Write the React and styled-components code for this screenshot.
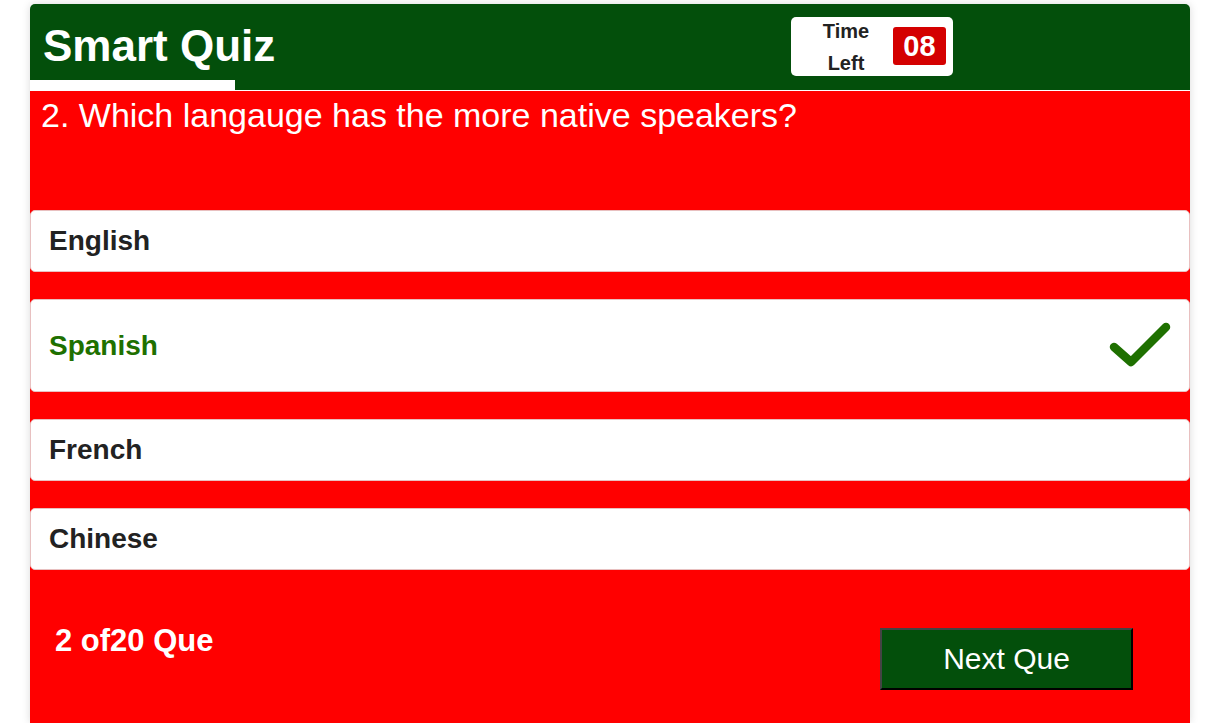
import React from "react";
import styled, { createGlobalStyle } from "styled-components";

const GlobalStyle = createGlobalStyle`
  html, body {
    margin: 0;
    padding: 0;
    overflow: hidden;
    background: #fff;
    font-family: "Liberation Sans", Arial, sans-serif;
  }
`;

const options = [
  { text: "English" },
  { text: "Spanish", correct: true },
  { text: "French" },
  { text: "Chinese" },
];

const CheckIcon = () => (
  <svg width="62" height="63" viewBox="0 0 62 63">
    <path
      d="M5 33 L22 48 L57 13"
      fill="none"
      stroke="#1e7000"
      strokeWidth="8.5"
      strokeLinecap="round"
      strokeLinejoin="round"
    />
  </svg>
);

const App = () => {
  return (
    <Page>
      <GlobalStyle />
      <Card>
        <Header>
          <HeaderRow>
            <Title>Smart Quiz</Title>
            <Timer>
              <TimerLabel>
                Time
                <br />
                Left
              </TimerLabel>
              <TimerCount>08</TimerCount>
            </Timer>
          </HeaderRow>
          <Progress />
        </Header>
        <Body>
          <Question>2. Which langauge has the more native speakers?</Question>
          <OptionList>
            {options.map((item) => (
              <Option key={item.text} $correct={item.correct}>
                <span>{item.text}</span>
                {item.correct && <CheckIcon />}
              </Option>
            ))}
          </OptionList>
          <Footer>
            <Count>2 of20 Que</Count>
            <NextButton>Next Que</NextButton>
          </Footer>
        </Body>
      </Card>
    </Page>
  );
};

const Page = styled.div`
  padding: 4px 19px 0 30px;
`;

const Card = styled.div`
  width: 1160px;
  background: #fff;
  border-radius: 5px 5px 0 0;
  box-shadow: 0 0 8px rgba(0, 0, 0, 0.15);
`;

const Header = styled.header`
  background: #034f0b;
  border-radius: 5px 5px 0 0;
  display: flex;
  flex-direction: column;
`;

const HeaderRow = styled.div`
  height: 76px;
  box-sizing: border-box;
  padding: 8px 237px 0 13px;
  display: flex;
  align-items: center;
  justify-content: space-between;
`;

const Title = styled.h1`
  margin: 0;
  color: #fff;
  font-size: 44px;
  font-weight: bold;
`;

const Timer = styled.div`
  width: 162px;
  height: 59px;
  box-sizing: border-box;
  background: #fff;
  border-radius: 5px;
  display: flex;
  align-items: center;
  padding: 0 7px 0 10px;
  gap: 2px;
`;

const TimerLabel = styled.div`
  width: 90px;
  padding-top: 2px;
  text-align: center;
  font-size: 20px;
  font-weight: bold;
  line-height: 32px;
  color: #222;
`;

const TimerCount = styled.div`
  width: 53px;
  height: 38px;
  background: #d40000;
  border-radius: 3px;
  color: #fff;
  font-size: 29px;
  font-weight: bold;
  display: flex;
  align-items: center;
  justify-content: center;
`;

const Progress = styled.div`
  width: 205px;
  height: 10px;
  background: #fff;
`;

const Body = styled.section`
  margin-top: 1px;
  background: #ff0000;
  display: flex;
  flex-direction: column;
`;

const Question = styled.h2`
  margin: 0;
  padding: 5px 11px 0;
  color: #fff;
  font-size: 34px;
  font-weight: normal;
  line-height: 39px;
`;

const OptionList = styled.div`
  margin-top: 75px;
  display: flex;
  flex-direction: column;
  gap: 27px;
`;

const Option = styled.div`
  background: #fff;
  border: 1px solid #e8c0c0;
  border-radius: 5px;
  padding: 14px 18px;
  display: flex;
  align-items: center;
  justify-content: space-between;
  font-size: 28px;
  font-weight: bold;
  line-height: 32px;
  color: ${({ $correct }) => ($correct ? "#1e7000" : "#222")};
  svg {
    display: block;
  }
`;

const Footer = styled.div`
  padding: 53px 57px 33px 25px;
  display: flex;
  align-items: flex-start;
  justify-content: space-between;
`;

const Count = styled.div`
  color: #fff;
  font-size: 31px;
  font-weight: bold;
`;

const NextButton = styled.button`
  margin-top: 5px;
  width: 253px;
  height: 62px;
  background: #034f0b;
  color: #fff;
  font-family: "Liberation Sans", Arial, sans-serif;
  font-size: 30px;
  border: 2px solid;
  border-color: #444 #000 #000 #444;
  cursor: pointer;
`;

export default App;
